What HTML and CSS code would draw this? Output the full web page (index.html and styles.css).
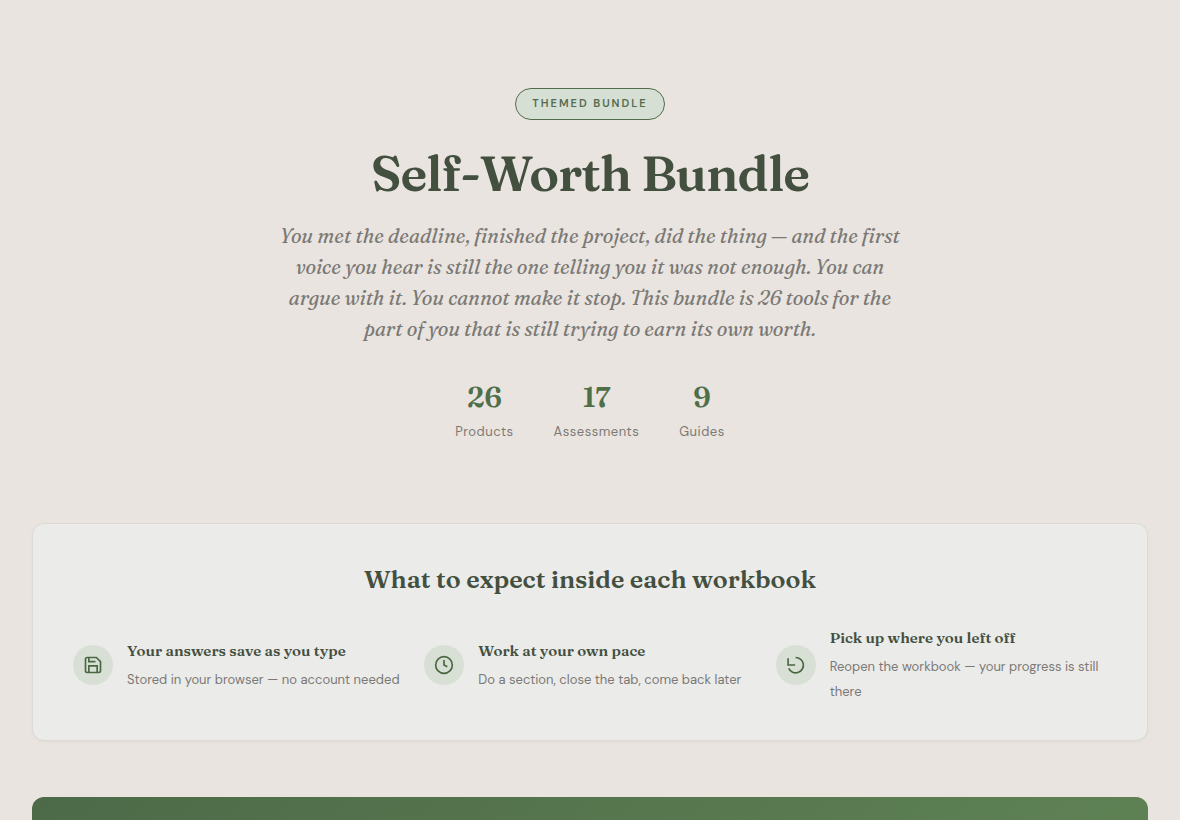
FILE: index.html
```html
<!DOCTYPE html>
<html lang="en">

<head>
    <meta charset="UTF-8">
    <meta name="viewport" content="width=device-width, initial-scale=1.0">
    <title>Self-Worth Bundle</title>
    <link rel="stylesheet" href="styles.css">
</head>

<body>
    <header class="hero">
        <span class="badge">THEMED BUNDLE</span>
        <h1>Self-Worth Bundle</h1>
        <p class="intro">
            You met the deadline, finished the project, did the thing — and the first
            voice you hear is still the one telling you it was not enough. You can
            argue with it. You cannot make it stop. This bundle is 26 tools for the
            part of you that is still trying to earn its own worth.
        </p>
        <div class="stats">
            <div class="stat">
                <span class="stat-number">26</span>
                <span class="stat-label">Products</span>
            </div>
            <div class="stat">
                <span class="stat-number">17</span>
                <span class="stat-label">Assessments</span>
            </div>
            <div class="stat">
                <span class="stat-number">9</span>
                <span class="stat-label">Guides</span>
            </div>
        </div>
    </header>

    <main class="container">
        <section class="expect">
            <h2>What to expect inside each workbook</h2>
            <div class="expect-grid">
                <div class="expect-item">
                    <div class="expect-icon">
                        <svg viewBox="0 0 24 24" aria-hidden="true">
                            <path d="M19 21H5a2 2 0 0 1-2-2V5a2 2 0 0 1 2-2h11l5 5v11a2 2 0 0 1-2 2z" />
                            <path d="M17 21v-8H7v8" />
                            <path d="M7 3v5h8" />
                        </svg>
                    </div>
                    <div>
                        <h3>Your answers save as you type</h3>
                        <p>Stored in your browser — no account needed</p>
                    </div>
                </div>
                <div class="expect-item">
                    <div class="expect-icon">
                        <svg viewBox="0 0 24 24" aria-hidden="true">
                            <circle cx="12" cy="12" r="10" />
                            <path d="M12 6v6l4 2" />
                        </svg>
                    </div>
                    <div>
                        <h3>Work at your own pace</h3>
                        <p>Do a section, close the tab, come back later</p>
                    </div>
                </div>
                <div class="expect-item">
                    <div class="expect-icon">
                        <svg viewBox="0 0 24 24" aria-hidden="true">
                            <path d="M2.5 4v8H11" />
                            <path d="M11.5 3a9.2 9.2 0 1 1-8.2 13" />
                        </svg>
                    </div>
                    <div>
                        <h3>Pick up where you left off</h3>
                        <p>Reopen the workbook — your progress is still there</p>
                    </div>
                </div>
            </div>
        </section>

        <section class="banner"></section>
    </main>
</body>

</html>
```
FILE: styles.css
```css
* {
    box-sizing: border-box;
    margin: 0;
    padding: 0;
}

body {
    font-family: "DM Sans", "Open Sans", sans-serif;
    background-color: #e9e4df;
    color: #6f6f6b;
}

h1,
h2,
h3,
.intro,
.stat-number {
    font-family: Fraunces, "Liberation Serif", serif;
}

h1,
h2,
h3 {
    color: #434f3f;
    font-weight: 600;
}

/* Hero */
.hero {
    padding: 88px 32px 79px;
    text-align: center;
}

.badge {
    display: inline-block;
    padding: 0 16px 1px;
    border: 1px solid #556b50;
    border-radius: 16px;
    background-color: #d6dfd3;
    color: #556b50;
    font-size: 11px;
    font-weight: 600;
    line-height: 29px;
    letter-spacing: 2px;
}

h1 {
    margin-top: 21px;
    font-size: 50px;
    line-height: 64px;
    letter-spacing: -1px;
}

.intro {
    max-width: 640px;
    margin: 15px auto 0;
    color: #7b7975;
    font-size: 20px;
    font-style: italic;
    line-height: 31px;
}

.stats {
    display: flex;
    justify-content: center;
    gap: 40px;
    margin-top: 32px;
}

.stat-number {
    display: block;
    color: #4f6f4a;
    font-size: 28px;
    font-weight: 600;
    line-height: 43px;
}

.stat-label {
    display: block;
    font-size: 13px;
    line-height: 25px;
    letter-spacing: 0.5px;
    color: #7b7975;
}

/* What to expect */
.container {
    padding: 0 32px;
}

.expect {
    padding: 36px 40px;
    border: 1px solid #dfd9d3;
    border-radius: 12px;
    background-color: #ebebea;
    box-shadow: 0 1px 3px rgba(0, 0, 0, 0.04);
}

.expect h2 {
    margin-bottom: 28px;
    font-size: 25px;
    line-height: 38px;
    text-align: center;
}

.expect-grid {
    display: grid;
    grid-template-columns: repeat(3, 1fr);
    gap: 20px;
}

.expect-item {
    display: flex;
    align-items: center;
    gap: 14px;
}

.expect-icon {
    display: flex;
    flex-shrink: 0;
    align-items: center;
    justify-content: center;
    width: 40px;
    height: 40px;
    border-radius: 50%;
    background-color: #d8e0d5;
}

.expect-icon svg {
    width: 20px;
    height: 20px;
    fill: none;
    stroke: #4a6741;
    stroke-width: 2;
}

.expect h3 {
    margin-bottom: 4px;
    font-size: 15px;
    line-height: 24px;
}

.expect p {
    font-size: 13px;
    line-height: 25px;
    color: #7b7975;
}

/* Green banner below the card */
.banner {
    min-height: 240px;
    margin-top: 56px;
    border-radius: 12px;
    background: linear-gradient(135deg, #4d6a48, #628657);
}
```
